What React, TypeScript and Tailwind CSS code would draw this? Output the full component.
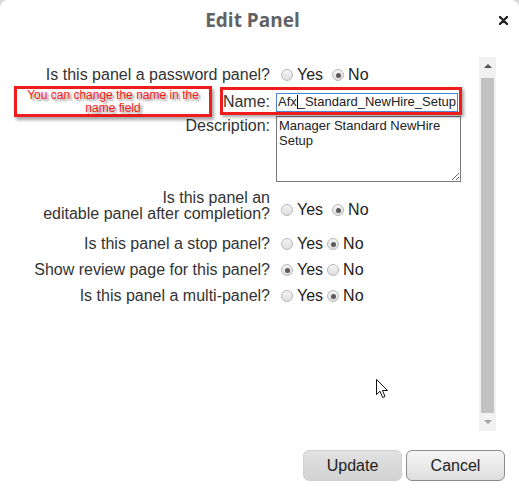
import React from "react";

const sans = { fontFamily: '"Liberation Sans", Arial, sans-serif' };

function Radio({ checked }: { checked?: boolean }) {
  return (
    <span className="inline-flex h-[12px] w-[12px] shrink-0 items-center justify-center rounded-full border border-[#b9b9b9] bg-gradient-to-b from-[#f4f4f4] to-[#dedede]">
      {checked && <span className="h-[5px] w-[5px] rounded-full bg-[#5a5a5a]" />}
    </span>
  );
}

function YesNo({ yes, wide }: { yes: boolean; wide?: boolean }) {
  return (
    <div className="ml-[11px] flex items-center text-[16px] text-[#222]">
      <Radio checked={yes} />
      <span className="ml-[4px]">Yes</span>
      <span className={wide ? "ml-[9px] flex" : "ml-[4px] flex"}>
        <Radio checked={!yes} />
      </span>
      <span className="ml-[4px]">No</span>
    </div>
  );
}

export default function App() {
  return (
    <div className="h-[500px] w-[519px] bg-[#d8d8d8]" style={sans}>
      <div className="relative flex h-[500px] flex-col rounded-t-[8px] bg-white">
        {/* header */}
        <div className="flex h-[57px] items-start">
          <div
            className="flex-1 pt-[6px] pl-[6px] text-center text-[19px] font-bold text-[#626262]"
            style={{ fontFamily: '"Open Sans", sans-serif' }}
          >
            Edit Panel
          </div>
          <svg width="9" height="9" viewBox="0 0 9 9" className="mt-[16px] mr-[11px]">
            <path d="M1 1 L8 8 M8 1 L1 8" stroke="#222" strokeWidth="2.4" strokeLinecap="round" />
          </svg>
        </div>

        {/* body */}
        <div className="flex h-[374px]">
          <div className="relative flex-1 text-[16px] text-[#333]">
            {/* password */}
            <div className="mt-[8px] flex h-[20px] items-center">
              <div className="ml-[30px] w-[240px] text-right">Is this panel a password panel?</div>
              <YesNo yes={false} wide />
            </div>

            {/* name */}
            <div className="relative mt-[5px] flex h-[24px] items-center">
              <div className="ml-[30px] w-[240px] text-right leading-[18px]">Name:</div>
              <div className="ml-[6px] flex h-[19px] w-[182px] items-center overflow-hidden border border-[#4a86d8] px-[1px] text-[13px] whitespace-nowrap text-[#222]">
                Afx<span className="h-[14px] w-[1px] bg-black" />_Standard_NewHire_Setup
              </div>
              <div className="absolute top-[-3px] left-[220px] h-[28px] w-[242px] border-[3px] border-[#ee1c1c] shadow-[2px_2px_3px_rgba(0,0,0,0.35)]" />
            </div>

            {/* description */}
            <div className="mt-[2px] flex items-start">
              <div className="ml-[30px] w-[240px] pt-[1px] text-right leading-[18px]">Description:</div>
              <textarea
                readOnly
                value="Manager Standard NewHire Setup"
                className="ml-[6px] h-[66px] w-[185px] border border-[#7a7a7a] px-[2px] py-[1px] text-[13px] leading-[15px] text-[#222] outline-none"
                style={sans}
              />
            </div>

            {/* editable */}
            <div className="mt-[8px] flex items-start">
              <div className="ml-[30px] w-[240px] text-right leading-[16px]">
                Is this panel an
                <br />
                editable panel after completion?
              </div>
              <div className="mt-[12px] flex h-[16px] items-center">
                <YesNo yes={false} wide />
              </div>
            </div>

            {/* stop */}
            <div className="mt-[12px] flex h-[20px] items-center">
              <div className="ml-[30px] w-[240px] text-right">Is this panel a stop panel?</div>
              <YesNo yes={false} />
            </div>

            {/* review */}
            <div className="mt-[6px] flex h-[20px] items-center">
              <div className="ml-[30px] w-[240px] text-right">Show review page for this panel?</div>
              <YesNo yes />
            </div>

            {/* multi */}
            <div className="mt-[6px] flex h-[20px] items-center">
              <div className="ml-[30px] w-[240px] text-right">Is this panel a multi-panel?</div>
              <YesNo yes={false} />
            </div>

            {/* annotation */}
            <div className="absolute top-[29px] left-[14px] flex h-[31px] w-[198px] flex-col items-center justify-center border-[3px] border-[#ee1c1c] text-center text-[12px] leading-[13px] text-[#ff1a1a] shadow-[2px_3px_3px_rgba(0,0,0,0.35)] [text-shadow:2px_2px_2px_rgba(0,0,0,0.45)]">
              You can change the name in the
              <br />
              name field
            </div>

            {/* mouse cursor */}
            <svg width="13" height="20" viewBox="0 0 13 20" className="absolute top-[322px] left-[376px]">
              <path
                d="M0.5 0.5 L0.5 15.5 L4 12.2 L6.6 18.5 L9 17.5 L6.5 11.5 L11.5 11.5 Z"
                fill="#fff"
                stroke="#111"
                strokeWidth="1"
                strokeLinejoin="miter"
              />
            </svg>
          </div>

          {/* scrollbar */}
          <div className="relative w-[17px] bg-[#f1f1f1]">
            <div className="flex h-[17px] items-center justify-center">
              <div className="h-0 w-0 border-x-[4px] border-b-[4px] border-x-transparent border-b-[#505050]" />
            </div>
            <div className="mx-[2px] mt-[4px] h-[335px] bg-[#c1c1c1]" />
            <div className="flex h-[17px] items-center justify-center">
              <div className="h-0 w-0 border-x-[4px] border-t-[4px] border-x-transparent border-t-[#a3a3a3]" />
            </div>
          </div>
          <div className="w-[23px]" />
        </div>

        {/* footer */}
        <div className="mt-[19px] flex justify-end gap-[4px] pr-[14px]">
          <button className="h-[31px] w-[99px] rounded-[6px] border border-[#d0d0d0] bg-gradient-to-b from-[#e2e2e2] to-[#d2d2d2] text-[16px] text-[#222]">
            Update
          </button>
          <button className="h-[31px] w-[99px] rounded-[6px] border border-[#8a8a8a] bg-gradient-to-b from-[#f6f6f6] to-[#dedede] text-[16px] text-[#222]">
            Cancel
          </button>
        </div>
      </div>
    </div>
  );
}
